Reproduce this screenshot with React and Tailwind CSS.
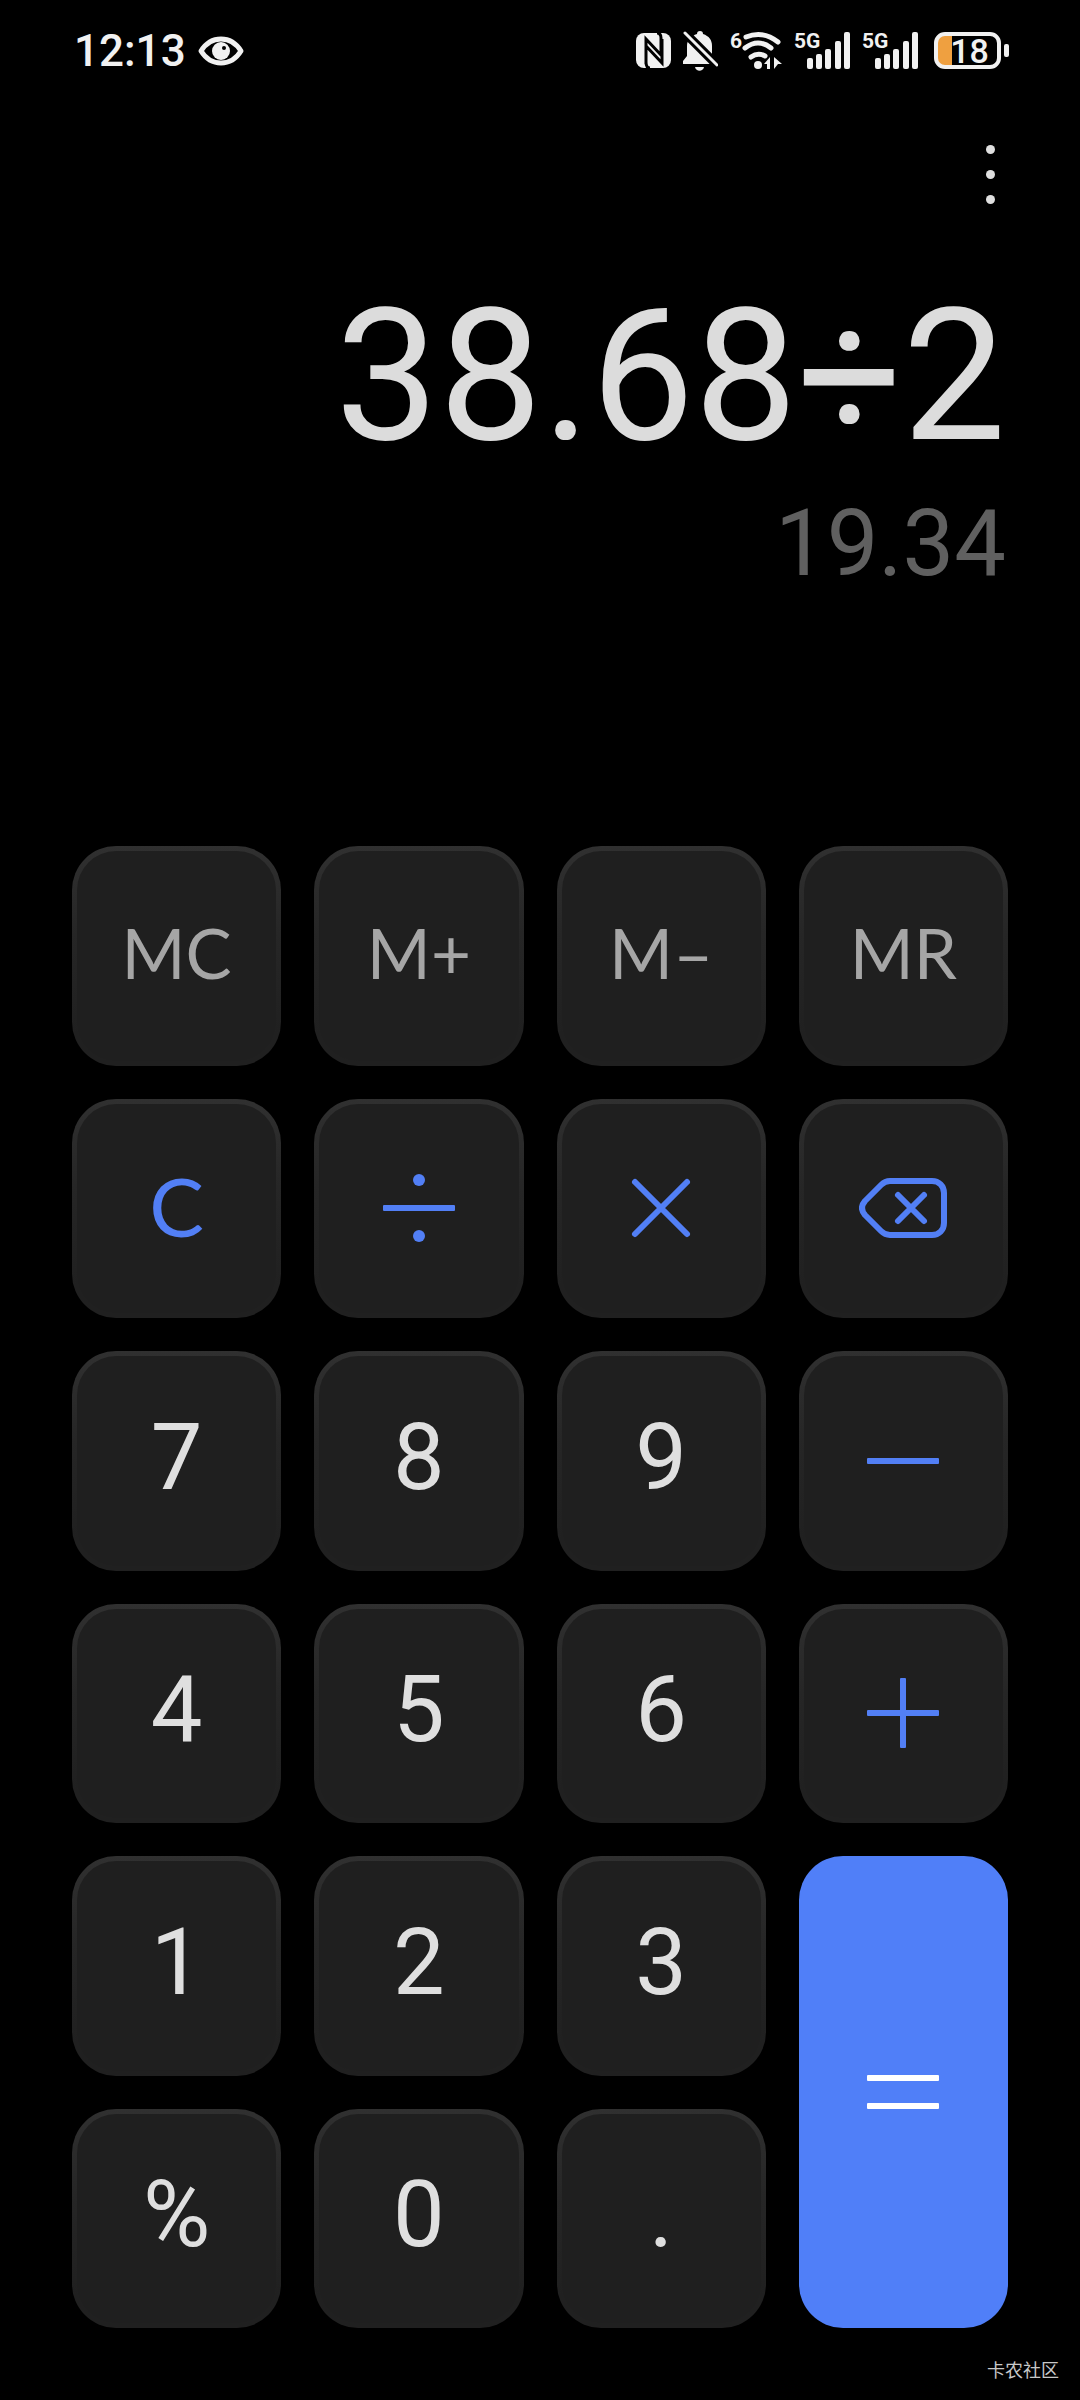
const BLUE = '#527ff5'

const KEYS = [
  { id: 'mc', label: 'MC', kind: 'memory' },
  { id: 'm-plus', label: 'M+', kind: 'memory' },
  { id: 'm-minus', label: 'M–', kind: 'memory' },
  { id: 'mr', label: 'MR', kind: 'memory' },
  { id: 'clear', label: 'C', kind: 'clear' },
  { id: 'divide', label: 'Divide', kind: 'icon', icon: DivideIcon },
  { id: 'multiply', label: 'Multiply', kind: 'icon', icon: MultiplyIcon },
  { id: 'backspace', label: 'Backspace', kind: 'icon', icon: BackspaceIcon },
  { id: '7', label: '7', kind: 'digit' },
  { id: '8', label: '8', kind: 'digit' },
  { id: '9', label: '9', kind: 'digit' },
  { id: 'minus', label: 'Minus', kind: 'icon', icon: MinusIcon },
  { id: '4', label: '4', kind: 'digit' },
  { id: '5', label: '5', kind: 'digit' },
  { id: '6', label: '6', kind: 'digit' },
  { id: 'plus', label: 'Plus', kind: 'icon', icon: PlusIcon },
  { id: '1', label: '1', kind: 'digit' },
  { id: '2', label: '2', kind: 'digit' },
  { id: '3', label: '3', kind: 'digit' },
  { id: 'equals', label: 'Equals', kind: 'equals', icon: EqualsIcon },
  { id: 'percent', label: '%', kind: 'digit' },
  { id: '0', label: '0', kind: 'digit' },
  { id: 'dot', label: '.', kind: 'digit' },
]

// Dark keys have a light rim that fades out towards the bottom
const DARK_KEY =
  'border-[5px] border-transparent [background:linear-gradient(#1f1f1f,#1f1f1f)_padding-box,linear-gradient(#303030,#262626_40%,#202020_85%)_border-box]'

const KEY_STYLES = {
  memory: `${DARK_KEY} pb-1.5 font-[Lato,sans-serif] text-[69px] leading-none text-[#a6a6a6]`,
  clear: `${DARK_KEY} pb-1.5 font-[Lato,sans-serif] text-[82px] leading-none text-[#527ff5]`,
  digit: `${DARK_KEY} pb-1.5 text-[92px] leading-none text-[#dfdfdf]`,
  icon: DARK_KEY,
  equals: 'row-span-2 bg-[#507ff8]',
}

function DivideIcon() {
  return (
    <svg className="w-20 h-20" viewBox="0 0 80 80" fill={BLUE} aria-hidden="true">
      <circle cx="40" cy="12" r="6" />
      <rect x="4" y="37" width="72" height="6" rx="1" />
      <circle cx="40" cy="68" r="6" />
    </svg>
  )
}

function MultiplyIcon() {
  return (
    <svg className="w-20 h-20" viewBox="0 0 80 80" fill="none" stroke={BLUE} strokeWidth={6} aria-hidden="true">
      <path strokeLinecap="round" d="M14 14L66 66M66 14L14 66" />
    </svg>
  )
}

function BackspaceIcon() {
  return (
    <svg className="w-[88px] h-20" viewBox="0 0 88 80" fill="none" stroke={BLUE} strokeWidth={6} aria-hidden="true">
      <path
        strokeLinejoin="round"
        d="M31 13H73C80 13 85 18 85 25V55C85 62 80 67 73 67H31Q26 67 22 63L6 47Q0 40 6 33L22 17Q26 13 31 13Z"
      />
      <path strokeLinecap="round" d="M39 27L65 53M65 27L39 53" />
    </svg>
  )
}

function MinusIcon() {
  return (
    <svg className="w-20 h-20" viewBox="0 0 80 80" fill={BLUE} aria-hidden="true">
      <rect x="4" y="37" width="72" height="6" rx="1" />
    </svg>
  )
}

function PlusIcon() {
  return (
    <svg className="w-20 h-20" viewBox="0 0 80 80" fill={BLUE} aria-hidden="true">
      <rect x="4" y="37" width="72" height="6" rx="1" />
      <rect x="37" y="5" width="6" height="70" rx="1" />
    </svg>
  )
}

function EqualsIcon() {
  return (
    <svg className="w-20 h-20" viewBox="0 0 80 80" fill="#ffffff" aria-hidden="true">
      <rect x="4" y="23" width="72" height="6" rx="1" />
      <rect x="4" y="51" width="72" height="6" rx="1" />
    </svg>
  )
}

function EyeIcon() {
  return (
    <svg className="w-[46px] h-8" viewBox="0 0 46 32" aria-hidden="true">
      <path
        d="M3 16C8 8 15 4 23 4S38 8 43 16C38 24 31 28 23 28S8 24 3 16Z"
        fill="none"
        stroke="#f1f1f1"
        strokeWidth="5"
        strokeLinejoin="round"
      />
      <circle cx="23" cy="16" r="9" fill="#f1f1f1" />
      <circle cx="26" cy="13" r="2" fill="#000000" />
    </svg>
  )
}

function NfcIcon() {
  return (
    <svg className="w-[35px] h-10" viewBox="0 0 35 40" aria-hidden="true">
      <rect x="0" y="2" width="35" height="35" rx="8" fill="#f1f1f1" />
      <path
        d="M10 33V8L25 24V7Q25 2 21 2M26 8V32L10 15M10 31Q10 37 14 37"
        fill="none"
        stroke="#000000"
        strokeWidth="3"
      />
    </svg>
  )
}

function MutedIcon() {
  return (
    <svg className="w-[35px] h-10" viewBox="0 0 35 40" aria-hidden="true">
      <path
        d="M17 0C19 0 20 1 20 3C26 5 29 9 29 15V25L32 30V33H0V30L4 25V15C4 9 8 5 14 3C14 1 15 0 17 0Z"
        fill="#f1f1f1"
      />
      <path d="M12 36H21C20 41 13 41 12 36Z" fill="#f1f1f1" />
      <path d="M0 0L35 35" stroke="#000000" strokeWidth="9" />
      <path d="M2 2L34 34" stroke="#f1f1f1" strokeWidth="3" strokeLinecap="round" />
    </svg>
  )
}

function WifiIcon() {
  return (
    <div className="relative w-[52px] h-10">
      <span className="absolute left-0 top-0 text-[21px] leading-none font-bold">6</span>
      <svg className="w-[52px] h-10" viewBox="0 0 52 40" aria-hidden="true">
        <g fill="none" stroke="#f1f1f1" strokeWidth="5" strokeLinecap="round">
          <path d="M16 6Q33 -1 48 11" />
          <path d="M15 17Q28 7 41 17" />
          <path d="M21 26Q28 21 35 25" />
        </g>
        <circle cx="28" cy="34" r="4" fill="#f1f1f1" />
        <path d="M34 33L40 26V38H37V33ZM44 26L52 33H48L44 38Z" fill="#f1f1f1" />
      </svg>
    </div>
  )
}

function SignalIcon() {
  return (
    <div className="relative w-14 h-10">
      <span className="absolute left-0 top-0 text-[21px] leading-none font-bold">5G</span>
      <svg className="w-14 h-10" viewBox="0 0 56 40" fill="#f1f1f1" aria-hidden="true">
        <rect x="13" y="27" width="6" height="11" rx="2" />
        <rect x="22" y="23" width="6" height="15" rx="2" />
        <rect x="31" y="18" width="6" height="20" rx="2" />
        <rect x="41" y="10" width="6" height="28" rx="2" />
        <rect x="50" y="1" width="6" height="37" rx="2" />
      </svg>
    </div>
  )
}

function BatteryIcon() {
  return (
    <div className="relative w-[79px] h-10">
      <svg className="w-[79px] h-10" viewBox="0 0 79 40" aria-hidden="true">
        <path d="M22 3H14Q6 3 6 11V28Q6 36 14 36H22Z" fill="#efa040" />
        <rect x="6" y="3" width="63" height="33" rx="9" fill="none" stroke="#f1f1f1" strokeWidth="4" />
        <rect x="74" y="13" width="5" height="13" rx="2" fill="#f1f1f1" />
      </svg>
      <span className="absolute inset-x-1 top-0 text-center text-[34px] leading-[40px] font-medium">18</span>
    </div>
  )
}

function StatusBar() {
  return (
    <header className="flex items-center justify-between h-[102px] pl-[74px] pr-[71px] text-[#f1f1f1]">
      <div className="flex items-center gap-3">
        <time className="text-[44px] leading-none font-medium">12:13</time>
        <EyeIcon />
      </div>
      <div className="flex items-center gap-3">
        <NfcIcon />
        <MutedIcon />
        <WifiIcon />
        <SignalIcon />
        <SignalIcon />
        <BatteryIcon />
      </div>
    </header>
  )
}

function Key({ label, kind, icon: Icon }) {
  return (
    <button
      type="button"
      aria-label={label}
      className={`flex items-center justify-center rounded-[44px] ${KEY_STYLES[kind]}`}
    >
      {Icon ? <Icon /> : label}
    </button>
  )
}

export default function App() {
  return (
    <div className="flex flex-col min-h-screen bg-black font-[Roboto,sans-serif]">
      <StatusBar />

      <div className="flex justify-end h-36 px-[72px]">
        <button type="button" aria-label="More options" className="flex flex-col items-center justify-center gap-4 w-9">
          <span className="w-[9px] h-[9px] rounded-full bg-[#dfdfdf]" />
          <span className="w-[9px] h-[9px] rounded-full bg-[#dfdfdf]" />
          <span className="w-[9px] h-[9px] rounded-full bg-[#dfdfdf]" />
        </button>
      </div>

      {/* Display */}
      <main className="flex flex-col flex-1">
        <section className="h-[600px] px-[74px] pt-[30px] text-right">
          <p className="text-[184px] leading-[200px] text-[#dcdcdc]">38.68÷2</p>
          <p className="mt-[18px] text-[92px] leading-[100px] text-[#606060]">19.34</p>
        </section>

        {/* Keypad */}
        <section className="grid flex-1 grid-cols-4 grid-rows-6 gap-[33px] px-[72px]">
          {KEYS.map((key) => (
            <Key key={key.id} {...key} />
          ))}
        </section>
      </main>

      <footer className="flex items-center justify-end h-[72px] pt-2.5 pr-[21px] font-['Noto_Sans_CJK_SC',sans-serif] text-[18px] leading-none text-[#c8c8c8]">
        卡农社区
      </footer>
    </div>
  )
}
